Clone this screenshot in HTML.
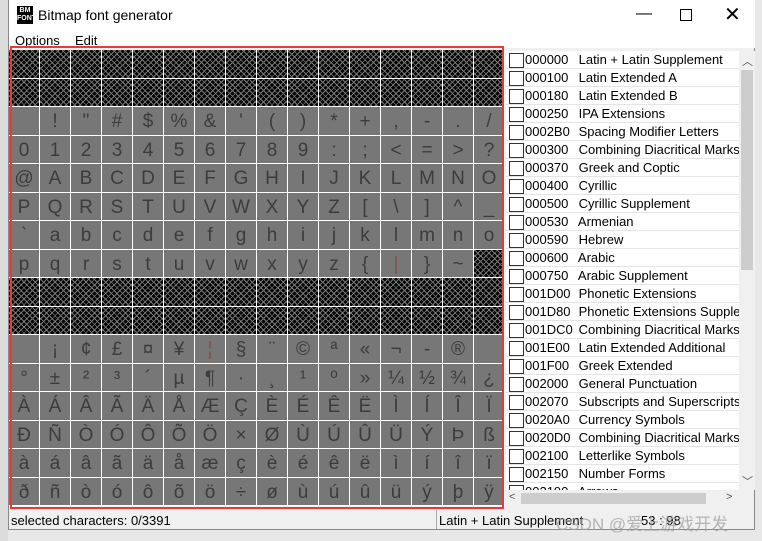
<!DOCTYPE html>
<html><head><meta charset="utf-8"><style>
*{margin:0;padding:0;box-sizing:border-box}
body{width:762px;height:541px;background:#e8e8e8;position:relative;overflow:hidden;font-family:"Liberation Sans","Noto Sans CJK SC",sans-serif}
#win{position:absolute;left:8px;top:0;width:747px;height:530px;background:#f0f0f0;border:1px solid #888;border-top:none}
#title{position:absolute;left:0;top:0;width:746px;height:32px;background:#fff}
#title .t{position:absolute;left:29px;top:7px;font-size:14px;color:#000}
#logo{position:absolute;left:8px;top:6px;width:16px;height:18px;background:#000;color:#fff;font-size:7px;font-weight:bold;line-height:8px;text-align:center;padding-top:1px}
#menu{position:absolute;left:0;top:32px;width:746px;height:16px;background:#fff;font-size:13px}
#menu span{position:absolute;top:1px}
#grid{position:absolute;left:0;top:50px;width:496px;height:456px;background:#fff}
.r{position:absolute;left:0;height:27.5px;width:496px}
.r i{font-style:normal;position:absolute;top:0;width:30px;height:27.5px;background:#777;color:#3c3c3c;font-size:19px;text-align:center;line-height:30px}
.r i.b{background-color:#000;background-image:repeating-linear-gradient(45deg,transparent 0 3px,#777 3px 4px),repeating-linear-gradient(-45deg,transparent 0 3px,#777 3px 4px)}
#red{position:absolute;left:1px;top:46px;width:494px;height:463px;border:2px solid #e83a3a}
#list{position:absolute;left:497px;top:51px;width:233px;height:439px;background:#fff;overflow:hidden}
.li{height:18px;border-bottom:1px solid #e4e4e4;font-size:13px;white-space:nowrap;position:relative;line-height:18px;padding-left:19px;color:#000}
.li:before{content:"";position:absolute;left:3px;top:2px;width:13px;height:13px;border:1px solid #333;background:#fff}
.li b{font-weight:normal;display:inline-block;width:50px}
#vs{position:absolute;left:730px;top:51px;width:16px;height:439px;background:#f0f0f0}
#vs .th{position:absolute;left:2px;top:19px;width:12px;height:200px;background:#cdcdcd}
#hs{position:absolute;left:497px;top:490px;width:233px;height:17px;background:#f0f0f0}
#hs .th{position:absolute;left:15px;top:3px;width:185px;height:11px;background:#cdcdcd}
.ar{position:absolute;font-size:11px;color:#555}
#status{position:absolute;left:0;top:510px;width:746px;height:19px;font-size:13px}
#wm{position:absolute;left:556px;top:510px;font-size:17px;color:rgba(160,160,160,.75);white-space:nowrap}
</style></head><body>
<div style="position:absolute;left:0;top:0;width:8px;height:541px;background:#dcdcdc"></div>
<div id="win">
<div id="title"><div id="logo">BM<br>FONT</div><span class="t">Bitmap font generator</span>
<span style="position:absolute;left:627px;top:5px;font-size:16px">—</span>
<span style="position:absolute;left:671px;top:9px;width:12px;height:12px;border:1px solid #000"></span>
<span style="position:absolute;left:715px;top:2px;font-size:20px;font-weight:300">✕</span></div>
<div id="menu"><span style="left:6px">Options</span><span style="left:66px">Edit</span></div>
<div id="grid">
<div class="r" style="top:0"><i class="b" style="left:0"></i><i class="b" style="left:31px"></i><i class="b" style="left:62px"></i><i class="b" style="left:93px"></i><i class="b" style="left:124px"></i><i class="b" style="left:155px"></i><i class="b" style="left:186px"></i><i class="b" style="left:217px"></i><i class="b" style="left:248px"></i><i class="b" style="left:279px"></i><i class="b" style="left:310px"></i><i class="b" style="left:341px"></i><i class="b" style="left:372px"></i><i class="b" style="left:403px"></i><i class="b" style="left:434px"></i><i class="b" style="left:465px"></i></div>
<div class="r" style="top:28.5px"><i class="b" style="left:0"></i><i class="b" style="left:31px"></i><i class="b" style="left:62px"></i><i class="b" style="left:93px"></i><i class="b" style="left:124px"></i><i class="b" style="left:155px"></i><i class="b" style="left:186px"></i><i class="b" style="left:217px"></i><i class="b" style="left:248px"></i><i class="b" style="left:279px"></i><i class="b" style="left:310px"></i><i class="b" style="left:341px"></i><i class="b" style="left:372px"></i><i class="b" style="left:403px"></i><i class="b" style="left:434px"></i><i class="b" style="left:465px"></i></div>
<div class="r" style="top:57px"><i style="left:0"></i><i style="left:31px">!</i><i style="left:62px">"</i><i style="left:93px">#</i><i style="left:124px">$</i><i style="left:155px">%</i><i style="left:186px">&amp;</i><i style="left:217px">'</i><i style="left:248px">(</i><i style="left:279px">)</i><i style="left:310px">*</i><i style="left:341px">+</i><i style="left:372px">,</i><i style="left:403px">-</i><i style="left:434px">.</i><i style="left:465px">/</i></div>
<div class="r" style="top:85.5px"><i style="left:0">0</i><i style="left:31px">1</i><i style="left:62px">2</i><i style="left:93px">3</i><i style="left:124px">4</i><i style="left:155px">5</i><i style="left:186px">6</i><i style="left:217px">7</i><i style="left:248px">8</i><i style="left:279px">9</i><i style="left:310px">:</i><i style="left:341px">;</i><i style="left:372px">&lt;</i><i style="left:403px">=</i><i style="left:434px">&gt;</i><i style="left:465px">?</i></div>
<div class="r" style="top:114px"><i style="left:0">@</i><i style="left:31px">A</i><i style="left:62px">B</i><i style="left:93px">C</i><i style="left:124px">D</i><i style="left:155px">E</i><i style="left:186px">F</i><i style="left:217px">G</i><i style="left:248px">H</i><i style="left:279px">I</i><i style="left:310px">J</i><i style="left:341px">K</i><i style="left:372px">L</i><i style="left:403px">M</i><i style="left:434px">N</i><i style="left:465px">O</i></div>
<div class="r" style="top:142.5px"><i style="left:0">P</i><i style="left:31px">Q</i><i style="left:62px">R</i><i style="left:93px">S</i><i style="left:124px">T</i><i style="left:155px">U</i><i style="left:186px">V</i><i style="left:217px">W</i><i style="left:248px">X</i><i style="left:279px">Y</i><i style="left:310px">Z</i><i style="left:341px">[</i><i style="left:372px">\</i><i style="left:403px">]</i><i style="left:434px">^</i><i style="left:465px">_</i></div>
<div class="r" style="top:171px"><i style="left:0">`</i><i style="left:31px">a</i><i style="left:62px">b</i><i style="left:93px">c</i><i style="left:124px">d</i><i style="left:155px">e</i><i style="left:186px">f</i><i style="left:217px">g</i><i style="left:248px">h</i><i style="left:279px">i</i><i style="left:310px">j</i><i style="left:341px">k</i><i style="left:372px">l</i><i style="left:403px">m</i><i style="left:434px">n</i><i style="left:465px">o</i></div>
<div class="r" style="top:199.5px"><i style="left:0">p</i><i style="left:31px">q</i><i style="left:62px">r</i><i style="left:93px">s</i><i style="left:124px">t</i><i style="left:155px">u</i><i style="left:186px">v</i><i style="left:217px">w</i><i style="left:248px">x</i><i style="left:279px">y</i><i style="left:310px">z</i><i style="left:341px">{</i><i style="left:372px;color:#8a4a4a">|</i><i style="left:403px">}</i><i style="left:434px">~</i><i class="b" style="left:465px"></i></div>
<div class="r" style="top:228px"><i class="b" style="left:0"></i><i class="b" style="left:31px"></i><i class="b" style="left:62px"></i><i class="b" style="left:93px"></i><i class="b" style="left:124px"></i><i class="b" style="left:155px"></i><i class="b" style="left:186px"></i><i class="b" style="left:217px"></i><i class="b" style="left:248px"></i><i class="b" style="left:279px"></i><i class="b" style="left:310px"></i><i class="b" style="left:341px"></i><i class="b" style="left:372px"></i><i class="b" style="left:403px"></i><i class="b" style="left:434px"></i><i class="b" style="left:465px"></i></div>
<div class="r" style="top:256.5px"><i class="b" style="left:0"></i><i class="b" style="left:31px"></i><i class="b" style="left:62px"></i><i class="b" style="left:93px"></i><i class="b" style="left:124px"></i><i class="b" style="left:155px"></i><i class="b" style="left:186px"></i><i class="b" style="left:217px"></i><i class="b" style="left:248px"></i><i class="b" style="left:279px"></i><i class="b" style="left:310px"></i><i class="b" style="left:341px"></i><i class="b" style="left:372px"></i><i class="b" style="left:403px"></i><i class="b" style="left:434px"></i><i class="b" style="left:465px"></i></div>
<div class="r" style="top:285px"><i style="left:0"></i><i style="left:31px">¡</i><i style="left:62px">¢</i><i style="left:93px">£</i><i style="left:124px">¤</i><i style="left:155px">¥</i><i style="left:186px;color:#8a4a4a">¦</i><i style="left:217px">§</i><i style="left:248px">¨</i><i style="left:279px">©</i><i style="left:310px">ª</i><i style="left:341px">«</i><i style="left:372px">¬</i><i style="left:403px">-</i><i style="left:434px">®</i><i style="left:465px"></i></div>
<div class="r" style="top:313.5px"><i style="left:0">°</i><i style="left:31px">±</i><i style="left:62px">²</i><i style="left:93px">³</i><i style="left:124px">´</i><i style="left:155px">µ</i><i style="left:186px">¶</i><i style="left:217px">·</i><i style="left:248px">¸</i><i style="left:279px">¹</i><i style="left:310px">º</i><i style="left:341px">»</i><i style="left:372px">¼</i><i style="left:403px">½</i><i style="left:434px">¾</i><i style="left:465px">¿</i></div>
<div class="r" style="top:342px"><i style="left:0">À</i><i style="left:31px">Á</i><i style="left:62px">Â</i><i style="left:93px">Ã</i><i style="left:124px">Ä</i><i style="left:155px">Å</i><i style="left:186px">Æ</i><i style="left:217px">Ç</i><i style="left:248px">È</i><i style="left:279px">É</i><i style="left:310px">Ê</i><i style="left:341px">Ë</i><i style="left:372px">Ì</i><i style="left:403px">Í</i><i style="left:434px">Î</i><i style="left:465px">Ï</i></div>
<div class="r" style="top:370.5px"><i style="left:0">Ð</i><i style="left:31px">Ñ</i><i style="left:62px">Ò</i><i style="left:93px">Ó</i><i style="left:124px">Ô</i><i style="left:155px">Õ</i><i style="left:186px">Ö</i><i style="left:217px">×</i><i style="left:248px">Ø</i><i style="left:279px">Ù</i><i style="left:310px">Ú</i><i style="left:341px">Û</i><i style="left:372px">Ü</i><i style="left:403px">Ý</i><i style="left:434px">Þ</i><i style="left:465px">ß</i></div>
<div class="r" style="top:399px"><i style="left:0">à</i><i style="left:31px">á</i><i style="left:62px">â</i><i style="left:93px">ã</i><i style="left:124px">ä</i><i style="left:155px">å</i><i style="left:186px">æ</i><i style="left:217px">ç</i><i style="left:248px">è</i><i style="left:279px">é</i><i style="left:310px">ê</i><i style="left:341px">ë</i><i style="left:372px">ì</i><i style="left:403px">í</i><i style="left:434px">î</i><i style="left:465px">ï</i></div>
<div class="r" style="top:427.5px"><i style="left:0">ð</i><i style="left:31px">ñ</i><i style="left:62px">ò</i><i style="left:93px">ó</i><i style="left:124px">ô</i><i style="left:155px">õ</i><i style="left:186px">ö</i><i style="left:217px">÷</i><i style="left:248px">ø</i><i style="left:279px">ù</i><i style="left:310px">ú</i><i style="left:341px">û</i><i style="left:372px">ü</i><i style="left:403px">ý</i><i style="left:434px">þ</i><i style="left:465px">ÿ</i></div>
</div>
<div id="red"></div>
<div id="list">
<div class="li"><b>000000</b> Latin + Latin Supplement</div>
<div class="li"><b>000100</b> Latin Extended A</div>
<div class="li"><b>000180</b> Latin Extended B</div>
<div class="li"><b>000250</b> IPA Extensions</div>
<div class="li"><b>0002B0</b> Spacing Modifier Letters</div>
<div class="li"><b>000300</b> Combining Diacritical Marks</div>
<div class="li"><b>000370</b> Greek and Coptic</div>
<div class="li"><b>000400</b> Cyrillic</div>
<div class="li"><b>000500</b> Cyrillic Supplement</div>
<div class="li"><b>000530</b> Armenian</div>
<div class="li"><b>000590</b> Hebrew</div>
<div class="li"><b>000600</b> Arabic</div>
<div class="li"><b>000750</b> Arabic Supplement</div>
<div class="li"><b>001D00</b> Phonetic Extensions</div>
<div class="li"><b>001D80</b> Phonetic Extensions Supplement</div>
<div class="li"><b>001DC0</b> Combining Diacritical Marks Supplement</div>
<div class="li"><b>001E00</b> Latin Extended Additional</div>
<div class="li"><b>001F00</b> Greek Extended</div>
<div class="li"><b>002000</b> General Punctuation</div>
<div class="li"><b>002070</b> Subscripts and Superscripts</div>
<div class="li"><b>0020A0</b> Currency Symbols</div>
<div class="li"><b>0020D0</b> Combining Diacritical Marks for Symbols</div>
<div class="li"><b>002100</b> Letterlike Symbols</div>
<div class="li"><b>002150</b> Number Forms</div>
<div class="li"><b>002190</b> Arrows</div>
</div>
<div id="vs"><span class="ar" style="left:3px;top:2px">︿</span><div class="th"></div><span class="ar" style="left:3px;top:422px">﹀</span></div>
<div id="hs"><span class="ar" style="left:3px;top:1px">&lt;</span><div class="th"></div><span class="ar" style="left:220px;top:1px">&gt;</span></div>
<div id="status"><span style="position:absolute;left:2px;top:3px">selected characters: 0/3391</span>
<span style="position:absolute;left:427px;top:0;width:1px;height:19px;background:#aaa"></span>
<span style="position:absolute;left:430px;top:3px">Latin + Latin Supplement</span>
<span style="position:absolute;left:632px;top:3px">53 : 98</span></div>
</div>
<div id="wm">CSDN @爱上游戏开发</div>
</body></html>
